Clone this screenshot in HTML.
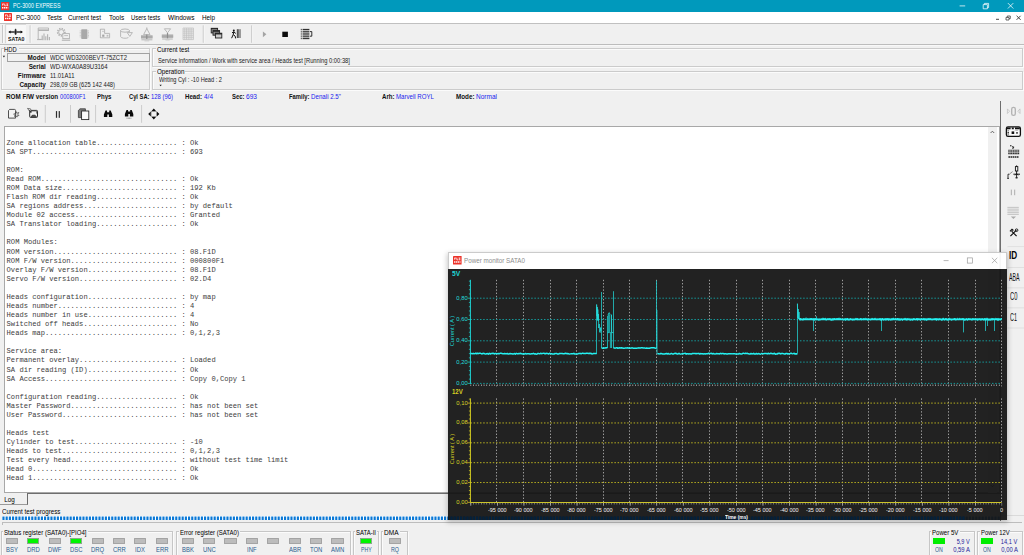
<!DOCTYPE html>
<html><head><meta charset="utf-8"><title>PC-3000 EXPRESS</title>
<style>
html,body{margin:0;padding:0;}
body{width:1024px;height:555px;overflow:hidden;background:#f0f0f0;position:relative;font-family:"Liberation Sans",sans-serif;}
div,span,svg{position:absolute;box-sizing:border-box;}
.t{white-space:pre;transform-origin:0 50%;font-family:"Liberation Sans",sans-serif;}
.b{font-weight:bold;}
.m{font-family:"Liberation Mono",monospace;}
#log{left:6.6px;top:138.6px;margin:0;position:absolute;font-family:"Liberation Mono",monospace;font-size:7.111px;line-height:9.083px;color:#3c3c3c;white-space:pre;}
</style></head><body>
<div style="left:0.00px;top:0.00px;width:1024.00px;height:12.00px;background:#0099bc;"></div>
<span class="t" style="left:13.20px;top:2.46px;font-size:6.4px;line-height:7.68px;color:#fff;transform:scaleX(0.8293);">PC-3000 EXPRESS</span>
<div style="left:0.00px;top:12.00px;width:1024.00px;height:10.70px;background:#fff;"></div>
<span class="t" style="left:15.60px;top:13.76px;font-size:6.4px;line-height:7.68px;transform:scaleX(0.9659);">PC-3000</span>
<span class="t" style="left:46.80px;top:13.76px;font-size:6.4px;line-height:7.68px;transform:scaleX(1.0042);">Tests</span>
<span class="t" style="left:68.30px;top:13.76px;font-size:6.4px;line-height:7.68px;transform:scaleX(0.9870);">Current test</span>
<span class="t" style="left:108.80px;top:13.76px;font-size:6.4px;line-height:7.68px;transform:scaleX(1.0173);">Tools</span>
<span class="t" style="left:131.20px;top:13.76px;font-size:6.4px;line-height:7.68px;transform:scaleX(0.9123);">Users tests</span>
<span class="t" style="left:167.80px;top:13.76px;font-size:6.4px;line-height:7.68px;transform:scaleX(1.0207);">Windows</span>
<span class="t" style="left:201.80px;top:13.76px;font-size:6.4px;line-height:7.68px;transform:scaleX(0.9876);">Help</span>
<div style="left:0.00px;top:22.70px;width:1024.00px;height:0.80px;background:#c0c0c0;"></div>
<div style="left:0.00px;top:44.00px;width:1024.00px;height:1.00px;background:#bcbcbc;"></div>
<div style="left:0.00px;top:45.00px;width:1024.00px;height:0.60px;background:#f8f8f8;"></div>
<div style="left:0.50px;top:48.00px;width:149.50px;height:42.00px;border:1px solid #cdcdcd;box-shadow:1px 1px 0 #fbfbfb, inset 1px 1px 0 #fbfbfb;"></div>
<div style="left:3.60px;top:45.40px;width:15.00px;height:6.00px;background:#f0f0f0;"></div>
<span class="t" style="left:4.40px;top:46.04px;font-size:6.6px;line-height:7.92px;transform:scaleX(0.8812);">HDD</span>
<div style="left:7.40px;top:53.40px;width:142.20px;height:8.90px;background:#f1f1f1;border:0.8px solid #a2a2a2;"></div>
<span class="t b" style="right:978.20px;transform-origin:100% 50%;top:53.92px;font-size:6.3px;line-height:7.56px;color:#111;">Model</span>
<span class="t" style="left:50.20px;top:53.92px;font-size:6.3px;line-height:7.56px;color:#222;transform:scaleX(0.9359);">WDC WD3200BEVT-75ZCT2</span>
<span class="t b" style="right:978.20px;transform-origin:100% 50%;top:63.02px;font-size:6.3px;line-height:7.56px;color:#111;">Serial</span>
<span class="t" style="left:50.20px;top:63.02px;font-size:6.3px;line-height:7.56px;color:#222;transform:scaleX(0.9564);">WD-WXA0A89U3164</span>
<span class="t b" style="right:978.20px;transform-origin:100% 50%;top:72.22px;font-size:6.3px;line-height:7.56px;color:#111;">Firmware</span>
<span class="t" style="left:50.20px;top:72.22px;font-size:6.3px;line-height:7.56px;color:#222;transform:scaleX(0.9408);">11.01A11</span>
<span class="t b" style="right:978.20px;transform-origin:100% 50%;top:81.22px;font-size:6.3px;line-height:7.56px;color:#111;">Capacity</span>
<span class="t" style="left:50.20px;top:81.22px;font-size:6.3px;line-height:7.56px;color:#222;transform:scaleX(0.9141);">298,09 GB (625 142 448)</span>
<div style="left:152.00px;top:48.00px;width:871.00px;height:19.00px;border:1px solid #cbcbcb;box-shadow:1px 1px 0 #fbfbfb, inset 1px 1px 0 #fbfbfb;"></div>
<div style="left:155.60px;top:45.40px;width:34.40px;height:6.00px;background:#f0f0f0;"></div>
<span class="t" style="left:156.60px;top:46.14px;font-size:6.6px;line-height:7.92px;transform:scaleX(0.9339);">Current test</span>
<span class="t" style="left:158.00px;top:56.82px;font-size:6.3px;line-height:7.56px;color:#1a1a1a;transform:scaleX(0.9159);">Service information / Work with service area / Heads test [Running 0:00:38]</span>
<div style="left:152.00px;top:71.00px;width:871.00px;height:19.00px;border:1px solid #cbcbcb;box-shadow:1px 1px 0 #fbfbfb, inset 1px 1px 0 #fbfbfb;"></div>
<div style="left:155.60px;top:68.60px;width:29.60px;height:6.00px;background:#f0f0f0;"></div>
<span class="t" style="left:156.60px;top:67.94px;font-size:6.6px;line-height:7.92px;transform:scaleX(0.9453);">Operation</span>
<span class="t" style="left:159.00px;top:75.82px;font-size:6.3px;line-height:7.56px;color:#1a1a1a;transform:scaleX(0.8967);">Writing Cyl : -10 Head : 2</span>
<span class="t b" style="left:6.00px;top:92.82px;font-size:6.3px;line-height:7.56px;color:#111;">ROM F/W version</span>
<span class="t" style="left:60.30px;top:92.82px;font-size:6.3px;line-height:7.56px;color:#1a1aee;transform:scaleX(0.9057);">000800F1</span>
<span class="t b" style="left:97.00px;top:92.82px;font-size:6.3px;line-height:7.56px;color:#111;transform:scaleX(0.9629);">Phys</span>
<span class="t b" style="left:129.00px;top:92.82px;font-size:6.3px;line-height:7.56px;color:#111;transform:scaleX(0.9150);">Cyl SA:</span>
<span class="t" style="left:151.00px;top:92.82px;font-size:6.3px;line-height:7.56px;color:#1a1aee;transform:scaleX(0.9375);">128 (96)</span>
<span class="t b" style="left:185.00px;top:92.82px;font-size:6.3px;line-height:7.56px;color:#111;transform:scaleX(0.9712);">Head:</span>
<span class="t" style="left:204.00px;top:92.82px;font-size:6.3px;line-height:7.56px;color:#1a1aee;transform:scaleX(1.0276);">4/4</span>
<span class="t b" style="left:232.00px;top:92.82px;font-size:6.3px;line-height:7.56px;color:#111;transform:scaleX(0.9393);">Sec:</span>
<span class="t" style="left:246.00px;top:92.82px;font-size:6.3px;line-height:7.56px;color:#1a1aee;transform:scaleX(1.0465);">693</span>
<span class="t b" style="left:289.00px;top:92.82px;font-size:6.3px;line-height:7.56px;color:#111;transform:scaleX(0.9294);">Family:</span>
<span class="t" style="left:311.00px;top:92.82px;font-size:6.3px;line-height:7.56px;color:#1a1aee;transform:scaleX(0.9802);">Denali 2.5&quot;</span>
<span class="t b" style="left:382.00px;top:92.82px;font-size:6.3px;line-height:7.56px;color:#111;transform:scaleX(0.9654);">Arh:</span>
<span class="t" style="left:396.00px;top:92.82px;font-size:6.3px;line-height:7.56px;color:#1a1aee;transform:scaleX(0.9691);">Marvell ROYL</span>
<span class="t b" style="left:456.00px;top:92.82px;font-size:6.3px;line-height:7.56px;color:#111;">Mode:</span>
<span class="t" style="left:476.00px;top:92.82px;font-size:6.3px;line-height:7.56px;color:#1a1aee;transform:scaleX(1.0343);">Normal</span>
<div style="left:4.40px;top:126.40px;width:996.00px;height:367.00px;background:#fff;border:0.8px solid #a8a8a8;"></div>
<div style="left:988.00px;top:127.20px;width:8.80px;height:365.40px;background:#f0f0f0;"></div>
<svg style="left:988px;top:128px" width="9" height="8" viewBox="0 0 9 8"><path d="M2.6 5 L4.4 3.2 L6.2 5" fill="none" stroke="#555" stroke-width="0.9"/></svg>
<svg style="left:988px;top:482px" width="9" height="8" viewBox="0 0 9 8"><path d="M2.6 3 L4.4 4.8 L6.2 3" fill="none" stroke="#555" stroke-width="0.9"/></svg>
<div style="left:1000.00px;top:100.50px;width:1.00px;height:420.00px;background:#6e6e6e;"></div>
<pre id="log">Zone allocation table................... : Ok
SA SPT.................................. : 693

ROM:
Read ROM................................ : Ok
ROM Data size........................... : 192 Kb
Flash ROM dir reading................... : Ok
SA regions address...................... : by default
Module 02 access........................ : Granted
SA Translator loading................... : Ok

ROM Modules:
ROM version............................. : 08.F1D
ROM F/W version......................... : 000800F1
Overlay F/W version..................... : 08.F1D
Servo F/W version....................... : 02.D4

Heads configuration..................... : by map
Heads number............................ : 4
Heads number in use..................... : 4
Switched off heads...................... : No
Heads map............................... : 0,1,2,3

Service area:
Permanent overlay....................... : Loaded
SA dir reading (ID)..................... : Ok
SA Access............................... : Copy 0,Copy 1

Configuration reading................... : Ok
Master Password......................... : has not been set
User Password........................... : has not been set

Heads test
Cylinder to test........................ : -10
Heads to test........................... : 0,1,2,3
Test every head......................... : without test time limit
Head 0.................................. : Ok
Head 1.................................. : Ok</pre>
<div style="left:0.00px;top:493.00px;width:27.60px;height:11.90px;background:#f0f0f0;border-right:0.9px solid #6a6a6a;border-bottom:0.8px solid #9a9a9a;"></div>
<div style="left:27.00px;top:492.50px;width:973.40px;height:0.90px;background:#6e6e6e;"></div>
<span class="t" style="left:4.20px;top:495.62px;font-size:6.3px;line-height:7.56px;">Log</span>
<span class="t" style="left:2.20px;top:507.82px;font-size:6.3px;line-height:7.56px;transform:scaleX(0.9886);">Current test progress</span>
<div style="left:2.00px;top:515.60px;width:998.00px;height:4.40px;background:#fff;"></div>
<svg style="left:2px;top:515px" width="1000" height="6" viewBox="2 515 1000 6"><path d="M2.4 518.3 H1000" stroke="#0a78d6" stroke-width="3.5" stroke-dasharray="2.15 1.05" fill="none"/></svg>
<div style="left:2.00px;top:521.60px;width:1020.00px;height:3.40px;border:0.8px solid #bdbdbd;border-right:none;border-bottom:none;"></div>
<div style="left:1001.00px;top:514.90px;width:23.00px;height:0.80px;background:#dadada;"></div>
<div style="left:0.80px;top:531.40px;width:172.60px;height:26.00px;border:0.8px solid #c6c6c6;box-shadow:1px 1px 0 #fbfbfb, inset 1px 1px 0 #fbfbfb;"></div>
<div style="left:3.40px;top:528.40px;width:84.60px;height:6.00px;background:#f0f0f0;"></div>
<span class="t" style="left:4.40px;top:528.52px;font-size:6.3px;line-height:7.56px;transform:scaleX(0.9656);">Status register (SATA0)-[PIO4]</span>
<div style="left:5.90px;top:538.00px;width:12.20px;height:6.40px;background:#bcbcbc;border:0.8px solid #a4a4a4;border-radius:0.5px;"></div>
<span class="t" style="left:6.07px;top:545.82px;font-size:6.3px;line-height:7.56px;color:#2b5c8f;transform:scaleX(0.9400);">BSY</span>
<div style="left:27.30px;top:538.00px;width:12.20px;height:6.40px;background:#00f500;border:0.8px solid #8aa88a;"></div>
<span class="t" style="left:26.98px;top:545.82px;font-size:6.3px;line-height:7.56px;color:#2b5c8f;transform:scaleX(0.9400);">DRD</span>
<div style="left:48.70px;top:538.00px;width:12.20px;height:6.40px;background:#bcbcbc;border:0.8px solid #a4a4a4;border-radius:0.5px;"></div>
<span class="t" style="left:48.06px;top:545.82px;font-size:6.3px;line-height:7.56px;color:#2b5c8f;transform:scaleX(0.9400);">DWF</span>
<div style="left:70.10px;top:538.00px;width:12.20px;height:6.40px;background:#00f500;border:0.8px solid #8aa88a;"></div>
<span class="t" style="left:69.95px;top:545.82px;font-size:6.3px;line-height:7.56px;color:#2b5c8f;transform:scaleX(0.9400);">DSC</span>
<div style="left:91.50px;top:538.00px;width:12.20px;height:6.40px;background:#bcbcbc;border:0.8px solid #a4a4a4;border-radius:0.5px;"></div>
<span class="t" style="left:91.02px;top:545.82px;font-size:6.3px;line-height:7.56px;color:#2b5c8f;transform:scaleX(0.9400);">DRQ</span>
<div style="left:112.90px;top:538.00px;width:12.20px;height:6.40px;background:#bcbcbc;border:0.8px solid #a4a4a4;border-radius:0.5px;"></div>
<span class="t" style="left:112.58px;top:545.82px;font-size:6.3px;line-height:7.56px;color:#2b5c8f;transform:scaleX(0.9400);">CRR</span>
<div style="left:134.30px;top:538.00px;width:12.20px;height:6.40px;background:#bcbcbc;border:0.8px solid #a4a4a4;border-radius:0.5px;"></div>
<span class="t" style="left:135.46px;top:545.82px;font-size:6.3px;line-height:7.56px;color:#2b5c8f;transform:scaleX(0.9400);">IDX</span>
<div style="left:155.70px;top:538.00px;width:12.20px;height:6.40px;background:#bcbcbc;border:0.8px solid #a4a4a4;border-radius:0.5px;"></div>
<span class="t" style="left:155.55px;top:545.82px;font-size:6.3px;line-height:7.56px;color:#2b5c8f;transform:scaleX(0.9400);">ERR</span>
<div style="left:176.40px;top:531.40px;width:174.40px;height:26.00px;border:0.8px solid #c6c6c6;box-shadow:1px 1px 0 #fbfbfb, inset 1px 1px 0 #fbfbfb;"></div>
<div style="left:179.20px;top:528.40px;width:61.00px;height:6.00px;background:#f0f0f0;"></div>
<span class="t" style="left:180.20px;top:528.52px;font-size:6.3px;line-height:7.56px;transform:scaleX(0.9558);">Error register (SATA0)</span>
<div style="left:181.70px;top:538.00px;width:12.20px;height:6.40px;background:#bcbcbc;border:0.8px solid #a4a4a4;border-radius:0.5px;"></div>
<span class="t" style="left:181.87px;top:545.82px;font-size:6.3px;line-height:7.56px;color:#2b5c8f;transform:scaleX(0.9400);">BBK</span>
<div style="left:203.08px;top:538.00px;width:12.20px;height:6.40px;background:#bcbcbc;border:0.8px solid #a4a4a4;border-radius:0.5px;"></div>
<span class="t" style="left:202.76px;top:545.82px;font-size:6.3px;line-height:7.56px;color:#2b5c8f;transform:scaleX(0.9400);">UNC</span>
<div style="left:224.46px;top:538.00px;width:12.20px;height:6.40px;background:#bcbcbc;border:0.8px solid #a4a4a4;border-radius:0.5px;"></div>
<div style="left:245.84px;top:538.00px;width:12.20px;height:6.40px;background:#bcbcbc;border:0.8px solid #a4a4a4;border-radius:0.5px;"></div>
<span class="t" style="left:247.17px;top:545.82px;font-size:6.3px;line-height:7.56px;color:#2b5c8f;transform:scaleX(0.9400);">INF</span>
<div style="left:267.22px;top:538.00px;width:12.20px;height:6.40px;background:#bcbcbc;border:0.8px solid #a4a4a4;border-radius:0.5px;"></div>
<div style="left:288.60px;top:538.00px;width:12.20px;height:6.40px;background:#bcbcbc;border:0.8px solid #a4a4a4;border-radius:0.5px;"></div>
<span class="t" style="left:288.61px;top:545.82px;font-size:6.3px;line-height:7.56px;color:#2b5c8f;transform:scaleX(0.9400);">ABR</span>
<div style="left:309.98px;top:538.00px;width:12.20px;height:6.40px;background:#bcbcbc;border:0.8px solid #a4a4a4;border-radius:0.5px;"></div>
<span class="t" style="left:309.88px;top:545.82px;font-size:6.3px;line-height:7.56px;color:#2b5c8f;transform:scaleX(0.9400);">TON</span>
<div style="left:331.36px;top:538.00px;width:12.20px;height:6.40px;background:#bcbcbc;border:0.8px solid #a4a4a4;border-radius:0.5px;"></div>
<span class="t" style="left:330.88px;top:545.82px;font-size:6.3px;line-height:7.56px;color:#2b5c8f;transform:scaleX(0.9400);">AMN</span>
<div style="left:352.80px;top:531.40px;width:26.60px;height:26.00px;border:0.8px solid #c6c6c6;box-shadow:1px 1px 0 #fbfbfb, inset 1px 1px 0 #fbfbfb;"></div>
<div style="left:355.20px;top:528.40px;width:22.00px;height:6.00px;background:#f0f0f0;"></div>
<span class="t" style="left:356.20px;top:528.52px;font-size:6.3px;line-height:7.56px;transform:scaleX(0.9470);">SATA-II</span>
<div style="left:360.10px;top:538.00px;width:12.20px;height:6.40px;background:#00f500;border:0.8px solid #8aa88a;"></div>
<span class="t" style="left:360.90px;top:545.82px;font-size:6.3px;line-height:7.56px;color:#2b5c8f;transform:scaleX(0.8183);">PHY</span>
<div style="left:380.90px;top:531.40px;width:26.90px;height:26.00px;border:0.8px solid #c6c6c6;box-shadow:1px 1px 0 #fbfbfb, inset 1px 1px 0 #fbfbfb;"></div>
<div style="left:383.40px;top:528.40px;width:16.50px;height:6.00px;background:#f0f0f0;"></div>
<span class="t" style="left:384.40px;top:528.52px;font-size:6.3px;line-height:7.56px;transform:scaleX(1.0357);">DMA</span>
<div style="left:388.60px;top:538.00px;width:12.20px;height:6.40px;background:#bcbcbc;border:0.8px solid #a4a4a4;border-radius:0.5px;"></div>
<span class="t" style="left:390.70px;top:545.82px;font-size:6.3px;line-height:7.56px;color:#2b5c8f;transform:scaleX(0.8466);">RQ</span>
<div style="left:928.50px;top:531.40px;width:46.90px;height:26.00px;border:0.8px solid #c6c6c6;box-shadow:1px 1px 0 #fbfbfb, inset 1px 1px 0 #fbfbfb;"></div>
<div style="left:931.40px;top:528.40px;width:28.40px;height:6.00px;background:#f0f0f0;"></div>
<span class="t" style="left:932.40px;top:528.52px;font-size:6.3px;line-height:7.56px;transform:scaleX(0.9665);">Power 5V</span>
<div style="left:933.40px;top:538.10px;width:11.40px;height:6.00px;background:#00ee00;"></div>
<span class="t" style="right:54.40px;transform-origin:100% 50%;top:537.82px;font-size:6.3px;line-height:7.56px;color:#22229a;transform:scaleX(0.8837);">5,9 V</span>
<span class="t" style="left:935.00px;top:545.82px;font-size:6.3px;line-height:7.56px;color:#2b5c8f;transform:scaleX(0.8254);">ON</span>
<span class="t" style="right:54.40px;transform-origin:100% 50%;top:545.82px;font-size:6.3px;line-height:7.56px;color:#22229a;transform:scaleX(0.9347);">0,59 A</span>
<div style="left:976.70px;top:531.40px;width:46.60px;height:26.00px;border:0.8px solid #c6c6c6;box-shadow:1px 1px 0 #fbfbfb, inset 1px 1px 0 #fbfbfb;"></div>
<div style="left:979.80px;top:528.40px;width:30.70px;height:6.00px;background:#f0f0f0;"></div>
<span class="t" style="left:980.80px;top:528.52px;font-size:6.3px;line-height:7.56px;transform:scaleX(0.9313);">Power 12V</span>
<div style="left:981.40px;top:538.10px;width:11.60px;height:6.00px;background:#00ee00;"></div>
<span class="t" style="right:6.40px;transform-origin:100% 50%;top:537.82px;font-size:6.3px;line-height:7.56px;color:#22229a;transform:scaleX(0.9004);">14,1 V</span>
<span class="t" style="left:982.60px;top:545.82px;font-size:6.3px;line-height:7.56px;color:#2b5c8f;transform:scaleX(0.8254);">ON</span>
<span class="t" style="right:6.40px;transform-origin:100% 50%;top:545.82px;font-size:6.3px;line-height:7.56px;color:#22229a;transform:scaleX(0.9291);">0,00 A</span>
<svg style="left:1.2px;top:1.7px" width="9.3" height="9.3" viewBox="0 0 9.3 9.3"><rect x="0" y="0" width="8.3" height="8.3" rx="0.4" fill="#ec3229"/><g fill="none" stroke="#fff" stroke-width="0.78"><path d="M1.245 1.9712500000000002 H3.1125000000000003 M1.6600000000000001 1.9712500000000002 V3.6312500000000005 M3.7350000000000003 1.6600000000000001 V3.7350000000000003 H4.7725 M5.3950000000000005 1.9712500000000002 H7.158750000000001 M5.8100000000000005 2.8012500000000005 H6.8475 M5.3950000000000005 3.6312500000000005 H7.158750000000001"/><path d="M1.0375 5.8100000000000005 H7.262500000000001" stroke-width="1.56" stroke-dasharray="1.35 0.57"/></g></svg>
<svg style="left:3.9px;top:13.0px" width="9.0" height="9.0" viewBox="0 0 9.0 9.0"><rect x="0" y="0" width="8.0" height="8.0" rx="0.4" fill="#ec3229"/><g fill="none" stroke="#fff" stroke-width="0.75"><path d="M1.2 1.9 H3.0 M1.6 1.9 V3.5 M3.6 1.6 V3.6 H4.6 M5.2 1.9 H6.9 M5.6 2.7 H6.6 M5.2 3.5 H6.9"/><path d="M1.0 5.6 H7.0" stroke-width="1.50" stroke-dasharray="1.30 0.55"/></g></svg>
<svg style="left:950px;top:0px" width="74" height="23" viewBox="950 0 74 23"><g fill="none" stroke="#fff" stroke-width="0.75"><path d="M959.6 5.9 H965.2"/><path d="M983.2 4.6 H987.4 V8.8 H983.2 Z M984.4 4.6 V3.4 H988.6 V7.6 H987.4"/><path d="M1007.9 3.1 L1013.3 8.5 M1013.3 3.1 L1007.9 8.5"/></g><g fill="none" stroke="#444" stroke-width="0.8"><path d="M996 19.3 H999" stroke-width="1"/><path d="M1006 17.4 H1009 V20 H1006 Z M1007.3 17.4 V16 H1010.3 V18.6 H1009"/><path d="M1016.6 15.8 L1020.6 19.8 M1020.6 15.8 L1016.6 19.8" stroke-width="1"/></g></svg>
<svg style="left:0px;top:23px" width="330" height="22" viewBox="0 23 330 22"><path d="M2.5 25 V43" stroke="#b4b4b4" stroke-width="0.8"/><path d="M3.3 25 V43" stroke="#fff" stroke-width="0.6"/><rect x="5.6" y="24.2" width="20.4" height="19" fill="#f8f8f8"/><path d="M5.6 43.2 V24.4 H26" stroke="#c9c9c9" stroke-width="0.7" fill="none"/><path d="M9.5 32 H21.8" stroke="#111" stroke-width="1.3"/><path d="M8.2 32 L10.6 30.6 V33.4 Z M23 32 L20.6 30.6 V33.4 Z" fill="#111"/><path d="M15.6 28.8 V34.8" stroke="#111" stroke-width="0.9"/><path d="M14.4 30.2 H16.8 M14.4 33.7 H16.8" stroke="#111" stroke-width="0.7"/><path d="M30.2 25.4 V42.8" stroke="#b5b5b5" stroke-width="0.8"/><path d="M31.0 25.4 V42.8" stroke="#fdfdfd" stroke-width="0.7"/><path d="M203.3 25.4 V42.8" stroke="#b5b5b5" stroke-width="0.8"/><path d="M204.10000000000002 25.4 V42.8" stroke="#fdfdfd" stroke-width="0.7"/><path d="M251.8 25.4 V42.8" stroke="#b5b5b5" stroke-width="0.8"/><path d="M252.60000000000002 25.4 V42.8" stroke="#fdfdfd" stroke-width="0.7"/><g fill="none" stroke="#b2b2b2" stroke-width="0.9"><path d="M38.2 28 H48.5 V31 M38.2 28 V39.4 H42.5"/><path d="M38.2 30.2 H48.5" stroke-width="1.6"/><path d="M37 39.6 H41"/><path d="M42.2 40.2 V35.5 M44 40.2 V33.5 M45.8 40.2 V36.2 M47.6 40.2 V34.2 M49.4 40.2 V37" stroke-width="1.1"/></g><g fill="none" stroke="#b2b2b2"><circle cx="61.3" cy="32.2" r="3.6" stroke-width="1.7" stroke-dasharray="1.3 1.1"/><circle cx="61.3" cy="32.2" r="2.6" stroke-width="0.8"/><rect x="62.8" y="33.6" width="6.6" height="5" fill="#f0f0f0" stroke-width="0.9"/><path d="M61.8 40.2 H70.2" stroke-width="1.1"/><path d="M64.2 35.6 H68" stroke-width="0.8"/></g><rect x="81.2" y="29.3" width="6.2" height="9.8" rx="0.8" fill="#a9a9a9"/><path d="M80.2 30.6 V38" stroke="#b8b8b8" stroke-width="1" stroke-dasharray="0.7 0.8"/><path d="M88.4 30.6 V38" stroke="#b8b8b8" stroke-width="1" stroke-dasharray="0.7 0.8"/><g fill="none" stroke="#b2b2b2" stroke-width="0.9"><path d="M100.4 29 V38 M100.4 29.2 H104.6 V33.4 H109.6 V37.8 H100.4"/></g><rect x="102.2" y="34.6" width="2.2" height="2.2" fill="#a6a6a6"/><rect x="106.6" y="34.8" width="1.8" height="1.8" fill="#bcbcbc"/><rect x="102.4" y="30.8" width="1.2" height="1.2" fill="#bcbcbc"/><g fill="none" stroke="#b2b2b2" stroke-width="0.9"><ellipse cx="125" cy="30.6" rx="4.4" ry="1.6"/><path d="M120.6 30.6 V36.6 A4.4 1.8 0 0 0 128.4 37.6 M129.4 30.6 V32"/><path d="M127.2 32.6 H132.4 L129.8 36.4 Z" fill="#f0f0f0"/></g><g fill="none" stroke="#b2b2b2" stroke-width="0.9"><path d="M146.8 27.4 V29.2 M146.8 28.6 L143.6 34.6 H150 Z"/></g><rect x="141" y="35.2" width="11.6" height="3.4" fill="#b4b4b4"/><path d="M141 37 H152.6" stroke="#9c9c9c" stroke-width="0.6"/><path d="M146.8 34.4 V39" stroke="#8e8e8e" stroke-width="1.2"/><path d="M141.4 39.8 H152.4" stroke="#a8a8a8" stroke-width="0.8"/><path d="M144.5 40.9 H149.2" stroke="#bbb" stroke-width="0.6"/><g fill="none" stroke="#b2b2b2" stroke-width="0.9"><path d="M164.4 28.8 H170.6 L167.5 32.8 Z"/></g><rect x="161.8" y="34.4" width="11.4" height="3.6" fill="#b4b4b4"/><path d="M161.8 36.2 H173.2" stroke="#9c9c9c" stroke-width="0.6"/><path d="M167.5 33 V38.4" stroke="#8e8e8e" stroke-width="1.2"/><path d="M162.2 39 H172.8" stroke="#a8a8a8" stroke-width="0.8"/><path d="M165.5 40 H169.6" stroke="#bbb" stroke-width="0.6"/><path d="M183.00 28 V39.6 M184.75 28 V39.6 M186.50 28 V39.6 M188.25 28 V39.6 M190.00 28 V39.6 M191.75 28 V39.6 M193.50 28 V39.6 M183 28.00 H193.5 M183 29.93 H193.5 M183 31.86 H193.5 M183 33.79 H193.5 M183 35.72 H193.5 M183 37.65 H193.5 M183 39.58 H193.5" stroke="#c0c0c0" stroke-width="0.7" fill="none"/><g stroke="#222" stroke-width="0.9"><rect x="211.2" y="28.3" width="6.4" height="4.6" fill="#9a9a9a"/><rect x="213" y="30.6" width="6.6" height="4.6" fill="#8a8a8a"/><rect x="215.4" y="33.2" width="6.4" height="4.8" fill="#c9c9c9"/></g><path d="M215.4 33.8 H221.8" stroke="#222" stroke-width="1.3"/><path d="M211.2 28.8 H217.6 M213 31.1 H219.6" stroke="#222" stroke-width="1.1"/><rect x="236.8" y="29.2" width="2" height="8.8" fill="#555"/><rect x="239" y="29.2" width="2" height="8.8" fill="#9a9a9a"/><circle cx="233.8" cy="30.6" r="1" fill="#111"/><path d="M233.9 31.6 L233.2 34.6 L235.2 36.2 L235.6 38.4 M233.2 34.6 L231.6 38.2 M232 32.8 L233.6 32 L235.8 33.4" stroke="#111" stroke-width="1" fill="none"/><path d="M262.9 31.4 L266.4 34.3 L262.9 37.2 Z" fill="#a4a4a4"/><rect x="282.3" y="31.7" width="5.6" height="5.3" fill="#0c0c0c"/><path d="M302.6 29.40 H309.4 M302.6 31.25 H309.4 M302.6 33.10 H309.4 M302.6 34.95 H309.4 M302.6 36.80 H309.4 M302.6 38.65 H309.4" stroke="#1a1a1a" stroke-width="1" fill="none"/><path d="M300.8 29.40 H301.8 M300.8 31.25 H301.8 M300.8 33.10 H301.8 M300.8 34.95 H301.8 M300.8 36.80 H301.8 M300.8 38.65 H301.8" stroke="#1a1a1a" stroke-width="0.9"/><path d="M310 31.6 H311.8 V36.2 H310" stroke="#1a1a1a" stroke-width="0.9" fill="none"/></svg>
<span class="t b" style="left:7.60px;top:35.54px;font-size:5.6px;line-height:6.72px;color:#111;transform:scaleX(0.9356);">SATA0</span>
<svg style="left:0px;top:103px" width="170" height="23" viewBox="0 103 170 23"><path d="M45.3 105 V122.8" stroke="#c2c2c2" stroke-width="0.8"/><path d="M70.5 105 V122.8" stroke="#c2c2c2" stroke-width="0.8"/><path d="M95.6 105 V122.8" stroke="#c2c2c2" stroke-width="0.8"/><path d="M141.6 105 V122.8" stroke="#c2c2c2" stroke-width="0.8"/><path d="M9.6 109.4 H14.4 Q15.6 109.4 15.6 110.6 V118.1 H8.5 V110.6 Z" fill="#f3f3f3" stroke="#333" stroke-width="0.85" stroke-linejoin="round"/><path d="M16.2 111.6 L16.9 113.3 L18.8 112.4 L17.9 114.3 L19 115.6 L17.4 115.6 L17.2 117 L16 116 L14.6 116.8 L14.9 115.2 L13.6 114.2 L15.2 113.6 Z" fill="#e4e4e4" stroke="#4a4a4a" stroke-width="0.7"/><path d="M15.6 112.4 V116.2" stroke="#333" stroke-width="0.85"/><rect x="29.7" y="110.4" width="7.8" height="7" rx="0.8" fill="#f2f2f2" stroke="#2c2c2c" stroke-width="1.0"/><path d="M30.6 116.4 L32.4 114.7 H35 L36.8 116.4 V117 H30.6 Z" fill="#4a4a4a"/><path d="M31 111 H36.4" stroke="#555" stroke-width="0.7"/><path d="M36.6 111 V113.6" stroke="#555" stroke-width="0.8"/><path d="M27.5 108.4 L30.6 108.9 L31.4 112 L29.6 111.2 Z" fill="#efefef" stroke="#444" stroke-width="0.7" stroke-linejoin="round"/><path d="M29.4 110.4 L31.2 112.6" stroke="#2c2c2c" stroke-width="1.1"/><rect x="55.9" y="111.1" width="1.2" height="6.7" fill="#2c2c2c"/><rect x="58.7" y="111.1" width="1.2" height="6.7" fill="#2c2c2c"/><path d="M78.4 110.4 L80 108.8 H85.4 V117.6 H78.4 Z" fill="#7c7c7c" stroke="#3a3a3a" stroke-width="0.8"/><rect x="81.6" y="111" width="7.2" height="8.6" fill="#fafafa" stroke="#222" stroke-width="0.85"/><path d="M107.0 110.5 h-1.5 l-1.6 4 v2.6 h3.4 v-2.6 h1.6 v2.6 h3.4 v-2.6 l-1.6 -4 h-1.5 v1.7 h-2.1 Z" fill="#0a0a0a"/><path d="M128.0 109.9 h-1.5 l-1.6 4 v2.6 h3.4 v-2.6 h1.6 v2.6 h3.4 v-2.6 l-1.6 -4 h-1.5 v1.7 h-2.1 Z" fill="#0a0a0a"/><path d="M126.6 118.2 H131.8" stroke="#666" stroke-width="0.9" stroke-dasharray="0.8 0.5"/><path d="M153.8 108.6 l2.4 2.6 h-4.8 Z M153.8 119.4 l2.4 -2.6 h-4.8 Z M148.20000000000002 114 l2.6 -2.4 v4.8 Z M159.4 114 l-2.6 -2.4 v4.8 Z" fill="#0a0a0a"/><rect x="151.20000000000002" y="111.6" width="5.2" height="4.8" fill="none" stroke="#777" stroke-width="0.5"/></svg>
<svg style="left:1001px;top:100px" width="23" height="232" viewBox="1001 100 23 232"><rect x="1011.7" y="107.4" width="3.6" height="8" rx="1.7" fill="none" stroke="#b3b3b3" stroke-width="1.35"/><path d="M1007.4 108.9 L1009.6 111.2 L1007.4 113.5 Z M1020 108.9 L1017.8 111.2 L1020 113.5 Z" fill="none" stroke="#b3b3b3" stroke-width="0.6"/><rect x="1006.4" y="126.8" width="14" height="9.6" rx="1.6" fill="#fafafa" stroke="#111" stroke-width="1.3"/><path d="M1007 128.4 H1019.8" stroke="#111" stroke-width="1.6" stroke-dasharray="3.6 1.2 2 1.2 4 0"/><path d="M1008.2 130.4 V135.4" stroke="#111" stroke-width="1.2" stroke-dasharray="0.9 0.7"/><rect x="1011.6" y="131.4" width="2.6" height="2.6" fill="#111"/><rect x="1016.2" y="132.2" width="1.6" height="1.4" fill="#111"/><path d="M1014.8 130.4 H1018.6" stroke="#555" stroke-width="0.6" stroke-dasharray="0.7 0.6"/><path d="M1010.6 145 V146.4 M1011.6 145.6 L1013.4 147.8 M1013.6 146.4 V148.2 H1012" stroke="#111" stroke-width="0.8" fill="none"/><path d="M1008.2 150.20 H1019.2 M1008.2 151.90 H1019.2 M1008.2 153.60 H1019.2" stroke="#333" stroke-width="1.1"/><path d="M1010 149.6 V154.6 M1012.4 149.6 V154.6 M1014.8 149.6 V154.6 M1017.2 149.6 V154.6" stroke="#e8e8e8" stroke-width="0.5"/><path d="M1008.4 157 H1019" stroke="#222" stroke-width="1.5" stroke-dasharray="1.6 0.5"/><rect x="1015.4" y="166.6" width="2.4" height="4.4" fill="#f4f4f4" stroke="#111" stroke-width="0.9"/><path d="M1016.6 165.4 V166.6 M1016.6 171 V178.4" stroke="#111" stroke-width="0.9"/><path d="M1013.4 174.2 H1020" stroke="#111" stroke-width="1"/><path d="M1015 175.4 L1016.6 173.4 L1018.2 175.4 M1015.2 177.8 H1018" stroke="#111" stroke-width="0.7" fill="none"/><path d="M1008 178.4 V174.2 H1009.6 M1007.2 178.4 H1009" stroke="#222" stroke-width="0.9" fill="none"/><path d="M1010 173.6 L1012.6 171.6" stroke="#666" stroke-width="0.7"/><rect x="1010.8" y="189.6" width="1.1" height="5.6" fill="#b3b3b3"/><rect x="1014.1" y="189.6" width="1.1" height="5.6" fill="#b3b3b3"/><path d="M1007.4 207.40 H1018.8 M1007.4 209.15 H1018.8 M1007.4 210.90 H1018.8 M1007.4 212.65 H1018.8 M1007.4 214.40 H1018.8" stroke="#bdbdbd" stroke-width="0.9"/><path d="M1010.8 216.4 H1016 L1013.4 218.9 Z" fill="#aaa"/><path d="M1010.4 236.2 L1016.4 230.2 M1016.6 236.2 L1011.6 231.2" stroke="#111" stroke-width="1.2" fill="none"/><path d="M1010 231.4 L1012 229.4 L1013.4 230.6" stroke="#111" stroke-width="1.3" fill="none"/><circle cx="1016.6" cy="230.2" r="1.3" fill="none" stroke="#111" stroke-width="0.9"/><path d="M1007.5 246.6 H1024" stroke="#dcdcdc" stroke-width="0.8"/><path d="M1007.5 267.5 H1024" stroke="#dcdcdc" stroke-width="0.8"/><path d="M1007.5 287.8 H1024" stroke="#dcdcdc" stroke-width="0.8"/><path d="M1007.5 307.8 H1024" stroke="#dcdcdc" stroke-width="0.8"/><path d="M1007.5 328 H1024" stroke="#dcdcdc" stroke-width="0.8"/></svg>
<span class="t b" style="left:1009.40px;top:250.38px;font-size:10.2px;line-height:12.24px;color:#050505;transform:scaleX(0.8039);">ID</span>
<span class="t" style="left:1008.50px;top:270.82px;font-size:10.8px;line-height:12.96px;color:#111;transform:scaleX(0.4905);">ABA</span>
<span class="t" style="left:1010.20px;top:291.26px;font-size:10.4px;line-height:12.48px;color:#111;transform:scaleX(0.5566);">C0</span>
<span class="t" style="left:1010.45px;top:311.66px;font-size:10.4px;line-height:12.48px;color:#111;transform:scaleX(0.5190);">C1</span>
<svg style="left:0px;top:50px" width="170" height="40" viewBox="0 50 170 40"><path d="M2.7 55.8 H5.1 L3.9 57.4 Z" fill="#222"/><path d="M159.4 84.7 H161.8 L160.6 86.2 Z" fill="#222"/></svg>
<div style="left:448.4px;top:252.3px;width:558.6px;height:268.1px;box-shadow:0 1.5px 5px 1px rgba(0,0,0,0.22);opacity:0.94;">
<div style="left:0;top:0;width:558.6px;height:16.7px;background:#fff;border:0.6px solid #c8c8c8;border-bottom:none;"></div>
<div style="left:0;top:16.7px;width:558.6px;height:251.40000000000003px;background:#151515;"></div>
</div>
<svg style="left:452.6px;top:256.2px" width="9.6" height="9.6" viewBox="0 0 9.6 9.6"><rect x="0" y="0" width="8.6" height="8.6" rx="0.4" fill="#ec3229"/><g fill="none" stroke="#fff" stroke-width="0.81"><path d="M1.2899999999999998 2.0425 H3.2249999999999996 M1.72 2.0425 V3.7624999999999997 M3.87 1.72 V3.87 H4.944999999999999 M5.59 2.0425 H7.4175 M6.02 2.9025 H7.095 M5.59 3.7624999999999997 H7.4175"/><path d="M1.075 6.02 H7.5249999999999995" stroke-width="1.61" stroke-dasharray="1.40 0.59"/></g></svg>
<span class="t" style="left:464.20px;top:256.82px;font-size:6.3px;line-height:7.56px;color:#8c8c8c;transform:scaleX(0.9936);">Power monitor SATA0</span>
<svg style="left:940px;top:254px" width="64" height="14" viewBox="940 254 64 14"><path d="M943.6 260.6 H948.6" stroke="#9a9a9a" stroke-width="0.7" fill="none"/><rect x="967.3" y="257.9" width="5.2" height="5.2" stroke="#9a9a9a" stroke-width="0.7" fill="none"/><path d="M991.9 257.8 L997.3 263.2 M997.3 257.8 L991.9 263.2" stroke="#9a9a9a" stroke-width="0.7" fill="none"/></svg>
<svg style="left:448px;top:269px" width="560" height="252" viewBox="448 269 560 252"><path d="M496.50 279.8 V386.40" stroke="#b4b4b4" stroke-width="0.85" stroke-dasharray="1.4 1.8" fill="none"/><path d="M523.50 279.8 V386.40" stroke="#b4b4b4" stroke-width="0.85" stroke-dasharray="1.4 1.8" fill="none"/><path d="M550.50 279.8 V386.40" stroke="#b4b4b4" stroke-width="0.85" stroke-dasharray="1.4 1.8" fill="none"/><path d="M576.50 279.8 V386.40" stroke="#b4b4b4" stroke-width="0.85" stroke-dasharray="1.4 1.8" fill="none"/><path d="M603.50 279.8 V386.40" stroke="#b4b4b4" stroke-width="0.85" stroke-dasharray="1.4 1.8" fill="none"/><path d="M629.50 279.8 V386.40" stroke="#b4b4b4" stroke-width="0.85" stroke-dasharray="1.4 1.8" fill="none"/><path d="M656.50 279.8 V386.40" stroke="#b4b4b4" stroke-width="0.85" stroke-dasharray="1.4 1.8" fill="none"/><path d="M682.50 279.8 V386.40" stroke="#b4b4b4" stroke-width="0.85" stroke-dasharray="1.4 1.8" fill="none"/><path d="M709.50 279.8 V386.40" stroke="#b4b4b4" stroke-width="0.85" stroke-dasharray="1.4 1.8" fill="none"/><path d="M736.50 279.8 V386.40" stroke="#b4b4b4" stroke-width="0.85" stroke-dasharray="1.4 1.8" fill="none"/><path d="M762.50 279.8 V386.40" stroke="#b4b4b4" stroke-width="0.85" stroke-dasharray="1.4 1.8" fill="none"/><path d="M789.50 279.8 V386.40" stroke="#b4b4b4" stroke-width="0.85" stroke-dasharray="1.4 1.8" fill="none"/><path d="M815.50 279.8 V386.40" stroke="#b4b4b4" stroke-width="0.85" stroke-dasharray="1.4 1.8" fill="none"/><path d="M842.50 279.8 V386.40" stroke="#b4b4b4" stroke-width="0.85" stroke-dasharray="1.4 1.8" fill="none"/><path d="M868.50 279.8 V386.40" stroke="#b4b4b4" stroke-width="0.85" stroke-dasharray="1.4 1.8" fill="none"/><path d="M895.50 279.8 V386.40" stroke="#b4b4b4" stroke-width="0.85" stroke-dasharray="1.4 1.8" fill="none"/><path d="M921.50 279.8 V386.40" stroke="#b4b4b4" stroke-width="0.85" stroke-dasharray="1.4 1.8" fill="none"/><path d="M948.50 279.8 V386.40" stroke="#b4b4b4" stroke-width="0.85" stroke-dasharray="1.4 1.8" fill="none"/><path d="M975.50 279.8 V386.40" stroke="#b4b4b4" stroke-width="0.85" stroke-dasharray="1.4 1.8" fill="none"/><path d="M1001.50 279.8 V386.40" stroke="#b4b4b4" stroke-width="0.85" stroke-dasharray="1.4 1.8" fill="none"/><path d="M470.4 298.20 H1001.6" stroke="#15999a" stroke-width="1.0" stroke-dasharray="1.5 1.7" fill="none"/><path d="M470.4 319.50 H1001.6" stroke="#15999a" stroke-width="1.0" stroke-dasharray="1.5 1.7" fill="none"/><path d="M470.4 340.80 H1001.6" stroke="#15999a" stroke-width="1.0" stroke-dasharray="1.5 1.7" fill="none"/><path d="M470.4 362.10 H1001.6" stroke="#15999a" stroke-width="1.0" stroke-dasharray="1.5 1.7" fill="none"/><path d="M470.4 383.40 H1001.6" stroke="#15999a" stroke-width="1.0" stroke-dasharray="1.5 1.7" fill="none"/><path d="M470.4 385.30 H1001.6" stroke="#b4b4b4" stroke-width="1.4" stroke-dasharray="0.75 1.906" fill="none"/><path d="M470.4 279.8 V383.90" stroke="#1fd6d6" stroke-width="1" fill="none"/><path d="M467.80 383.40 H470.4 M468.90 379.14 H470.4 M468.90 374.88 H470.4 M468.90 370.62 H470.4 M468.90 366.36 H470.4 M467.80 362.10 H470.4 M468.90 357.84 H470.4 M468.90 353.58 H470.4 M468.90 349.32 H470.4 M468.90 345.06 H470.4 M467.80 340.80 H470.4 M468.90 336.54 H470.4 M468.90 332.28 H470.4 M468.90 328.02 H470.4 M468.90 323.76 H470.4 M467.80 319.50 H470.4 M468.90 315.24 H470.4 M468.90 310.98 H470.4 M468.90 306.72 H470.4 M468.90 302.46 H470.4 M467.80 298.20 H470.4 M468.90 293.94 H470.4 M468.90 289.68 H470.4 M468.90 285.42 H470.4 M468.90 281.16 H470.4" stroke="#1fd6d6" stroke-width="0.7" fill="none"/><path d="M496.50 398.4 V502.40" stroke="#b4b4b4" stroke-width="0.85" stroke-dasharray="1.4 1.8" fill="none"/><path d="M523.50 398.4 V502.40" stroke="#b4b4b4" stroke-width="0.85" stroke-dasharray="1.4 1.8" fill="none"/><path d="M550.50 398.4 V502.40" stroke="#b4b4b4" stroke-width="0.85" stroke-dasharray="1.4 1.8" fill="none"/><path d="M576.50 398.4 V502.40" stroke="#b4b4b4" stroke-width="0.85" stroke-dasharray="1.4 1.8" fill="none"/><path d="M603.50 398.4 V502.40" stroke="#b4b4b4" stroke-width="0.85" stroke-dasharray="1.4 1.8" fill="none"/><path d="M629.50 398.4 V502.40" stroke="#b4b4b4" stroke-width="0.85" stroke-dasharray="1.4 1.8" fill="none"/><path d="M656.50 398.4 V502.40" stroke="#b4b4b4" stroke-width="0.85" stroke-dasharray="1.4 1.8" fill="none"/><path d="M682.50 398.4 V502.40" stroke="#b4b4b4" stroke-width="0.85" stroke-dasharray="1.4 1.8" fill="none"/><path d="M709.50 398.4 V502.40" stroke="#b4b4b4" stroke-width="0.85" stroke-dasharray="1.4 1.8" fill="none"/><path d="M736.50 398.4 V502.40" stroke="#b4b4b4" stroke-width="0.85" stroke-dasharray="1.4 1.8" fill="none"/><path d="M762.50 398.4 V502.40" stroke="#b4b4b4" stroke-width="0.85" stroke-dasharray="1.4 1.8" fill="none"/><path d="M789.50 398.4 V502.40" stroke="#b4b4b4" stroke-width="0.85" stroke-dasharray="1.4 1.8" fill="none"/><path d="M815.50 398.4 V502.40" stroke="#b4b4b4" stroke-width="0.85" stroke-dasharray="1.4 1.8" fill="none"/><path d="M842.50 398.4 V502.40" stroke="#b4b4b4" stroke-width="0.85" stroke-dasharray="1.4 1.8" fill="none"/><path d="M868.50 398.4 V502.40" stroke="#b4b4b4" stroke-width="0.85" stroke-dasharray="1.4 1.8" fill="none"/><path d="M895.50 398.4 V502.40" stroke="#b4b4b4" stroke-width="0.85" stroke-dasharray="1.4 1.8" fill="none"/><path d="M921.50 398.4 V502.40" stroke="#b4b4b4" stroke-width="0.85" stroke-dasharray="1.4 1.8" fill="none"/><path d="M948.50 398.4 V502.40" stroke="#b4b4b4" stroke-width="0.85" stroke-dasharray="1.4 1.8" fill="none"/><path d="M975.50 398.4 V502.40" stroke="#b4b4b4" stroke-width="0.85" stroke-dasharray="1.4 1.8" fill="none"/><path d="M1001.50 398.4 V502.40" stroke="#b4b4b4" stroke-width="0.85" stroke-dasharray="1.4 1.8" fill="none"/><path d="M470.4 403.10 H1001.6" stroke="#b8b020" stroke-width="1.0" stroke-dasharray="1.5 1.7" fill="none"/><path d="M470.4 422.96 H1001.6" stroke="#b8b020" stroke-width="1.0" stroke-dasharray="1.5 1.7" fill="none"/><path d="M470.4 442.82 H1001.6" stroke="#b8b020" stroke-width="1.0" stroke-dasharray="1.5 1.7" fill="none"/><path d="M470.4 462.68 H1001.6" stroke="#b8b020" stroke-width="1.0" stroke-dasharray="1.5 1.7" fill="none"/><path d="M470.4 482.54 H1001.6" stroke="#b8b020" stroke-width="1.0" stroke-dasharray="1.5 1.7" fill="none"/><path d="M470.4 503.80 H1001.6" stroke="#8c8c8c" stroke-width="1.4" stroke-dasharray="0.75 1.906" fill="none"/><path d="M470.4 504.40 H1002.1" stroke="#b4b4b4" stroke-width="2.6" stroke-dasharray="0.8 25.760" fill="none"/><path d="M470.4 502.40 H1001.6" stroke="#cdc52a" stroke-width="1.05" fill="none"/><path d="M470.4 398.4 V502.90" stroke="#d6ce22" stroke-width="1" fill="none"/><path d="M467.80 502.40 H470.4 M468.90 498.43 H470.4 M468.90 494.46 H470.4 M468.90 490.48 H470.4 M468.90 486.51 H470.4 M467.80 482.54 H470.4 M468.90 478.57 H470.4 M468.90 474.60 H470.4 M468.90 470.62 H470.4 M468.90 466.65 H470.4 M467.80 462.68 H470.4 M468.90 458.71 H470.4 M468.90 454.74 H470.4 M468.90 450.76 H470.4 M468.90 446.79 H470.4 M467.80 442.82 H470.4 M468.90 438.85 H470.4 M468.90 434.88 H470.4 M468.90 430.90 H470.4 M468.90 426.93 H470.4 M467.80 422.96 H470.4 M468.90 418.99 H470.4 M468.90 415.02 H470.4 M468.90 411.04 H470.4 M468.90 407.07 H470.4 M467.80 403.10 H470.4 M468.90 399.13 H470.4" stroke="#d6ce22" stroke-width="0.7" fill="none"/><path d="M596.50 353.70 L596.50 304.50 M601.50 348.00 L601.50 292.00 M611.50 348.00 L611.50 314.70 M613.50 348.00 L613.50 291.20 M656.50 348.00 L656.50 280.70 M797.50 353.70 L797.50 303.70 M813.50 319.30 L813.50 331.00 M881.50 319.30 L881.50 331.00 M963.50 319.30 L963.50 332.40 M985.50 319.30 L985.50 331.00 M994.50 319.30 L994.50 331.00 M987.50 319.30 L987.50 326.00 M816.50 319.30 L816.50 316.20" stroke="#22cccc" stroke-width="0.8" fill="none"/><rect x="607.9" y="314.6" width="2.3" height="17.8" fill="#1b9c9c"/><path d="M607.50 348.00 L607.50 316.00 M610.40 332.00 L610.40 348.00" stroke="#22cccc" stroke-width="0.8" fill="none"/><path d="M596.70 304.50 L597.00 316.00 L597.20 307.00 L597.50 320.00 L597.80 309.50 L598.10 321.00 L598.40 314.00 L598.80 328.00 L599.20 324.00 L599.60 332.00 L600.20 332.60 L600.70 327.50 L601.00 331.00 M608.00 315.40 L608.60 313.20 L609.30 312.60 L610.00 314.80 M609.70 332.60 L607.60 332.60 M611.40 314.70 L611.70 332.60 L613.40 332.60 M656.90 309.90 L657.00 353.70 M797.40 303.70 L797.80 318.00 L798.20 309.00 L798.60 319.00 L799.00 312.00 L799.40 319.30" stroke="#24dcdc" stroke-width="0.8" fill="none" stroke-linejoin="round"/><path d="M470.40 353.54 L471.30 353.39 L472.20 353.84 L473.10 353.32 L474.00 353.73 L474.90 353.58 L475.80 353.30 L476.70 353.71 L477.60 353.28 L478.50 353.64 L479.40 353.31 L480.30 353.33 L481.20 353.63 L482.10 353.99 L483.00 353.36 L483.90 353.45 L484.80 353.81 L485.70 354.10 L486.60 353.77 L487.50 353.61 L488.40 354.13 L489.30 353.29 L490.20 354.02 L491.10 353.51 L492.00 353.38 L492.90 353.36 L493.80 353.53 L494.70 353.98 L495.60 353.41 L496.50 353.77 L497.40 353.83 L498.30 353.59 L499.20 353.74 L500.10 353.31 L501.00 353.30 L501.90 353.44 L502.80 353.86 L503.70 353.63 L504.60 353.53 L505.50 353.78 L506.40 353.66 L507.30 353.52 L508.20 353.96 L509.10 353.88 L510.00 353.47 L510.90 353.77 L511.80 353.72 L512.70 354.04 L513.60 353.91 L514.50 353.51 L515.40 354.13 L516.30 353.36 L517.20 353.63 L518.10 353.93 L519.00 353.39 L519.90 353.69 L520.80 353.29 L521.70 353.85 L522.60 353.94 L523.50 353.77 L524.40 354.04 L525.30 353.53 L526.20 353.88 L527.10 353.78 L528.00 353.77 L528.90 353.66 L529.80 354.01 L530.70 354.10 L531.60 353.68 L532.50 353.85 L533.40 353.30 L534.30 353.88 L535.20 353.83 L536.10 354.14 L537.00 353.99 L537.90 353.51 L538.80 353.60 L539.70 353.85 L540.60 353.27 L541.50 353.67 L542.40 353.40 L543.30 353.36 L544.20 353.30 L545.10 353.94 L546.00 353.37 L546.90 353.47 L547.80 353.60 L548.70 354.03 L549.60 353.32 L550.50 353.65 L551.40 353.74 L552.30 354.05 L553.20 353.99 L554.10 354.03 L555.00 353.50 L555.90 353.62 L556.80 353.57 L557.70 354.05 L558.60 354.11 L559.50 353.39 L560.40 353.41 L561.30 353.46 L562.20 353.46 L563.10 353.69 L564.00 353.78 L564.90 353.49 L565.80 353.25 L566.70 353.63 L567.60 353.58 L568.50 353.76 L569.40 354.11 L570.30 353.87 L571.20 353.71 L572.10 353.81 L573.00 353.86 L573.90 353.30 L574.80 354.06 L575.70 353.95 L576.60 354.04 L577.50 353.97 L578.40 353.60 L579.30 353.61 L580.20 353.34 L581.10 353.82 L582.00 353.31 L582.90 353.31 L583.80 353.44 L584.70 353.40 L585.60 353.56 L586.50 353.30 L587.40 353.25 L588.30 353.39 L589.20 353.34 L590.10 353.58 L591.00 353.27 L591.90 354.04 L592.80 353.80 L593.70 353.38 L594.60 353.48 L595.50 353.56 L596.40 353.58 L596.70 353.70 M601.50 347.81 L602.40 348.17 L603.30 348.25 L604.20 347.98 L605.10 347.99 L606.00 347.79 L606.90 347.80 L607.40 348.00 M613.40 347.92 L614.30 347.88 L615.20 348.16 L616.10 347.83 L617.00 347.76 L617.90 348.23 L618.80 348.01 L619.70 347.82 L620.60 348.02 L621.50 347.76 L622.40 348.01 L623.30 348.24 L624.20 348.18 L625.10 348.10 L626.00 347.88 L626.90 347.93 L627.80 347.83 L628.70 348.14 L629.60 348.02 L630.50 348.14 L631.40 347.91 L632.30 347.86 L633.20 348.16 L634.10 348.24 L635.00 348.18 L635.90 348.15 L636.80 348.16 L637.70 348.12 L638.60 347.86 L639.50 348.01 L640.40 347.93 L641.30 347.76 L642.20 347.76 L643.10 347.89 L644.00 347.88 L644.90 348.10 L645.80 348.23 L646.70 347.97 L647.60 348.22 L648.50 348.24 L649.40 348.23 L650.30 347.93 L651.20 347.86 L652.10 347.86 L653.00 347.85 L653.90 347.85 L654.80 348.06 L655.70 348.20 L656.50 348.00 M657.40 354.01 L658.30 353.68 L659.20 353.84 L660.10 353.97 L661.00 353.33 L661.90 353.84 L662.80 354.07 L663.70 353.95 L664.60 353.93 L665.50 353.68 L666.40 353.41 L667.30 353.96 L668.20 353.55 L669.10 353.97 L670.00 354.12 L670.90 353.61 L671.80 353.61 L672.70 354.10 L673.60 353.90 L674.50 353.40 L675.40 353.36 L676.30 353.39 L677.20 354.06 L678.10 353.98 L679.00 353.38 L679.90 353.99 L680.80 354.13 L681.70 353.84 L682.60 353.57 L683.50 353.74 L684.40 353.37 L685.30 353.26 L686.20 354.12 L687.10 353.83 L688.00 353.72 L688.90 354.09 L689.80 353.64 L690.70 354.03 L691.60 353.99 L692.50 353.44 L693.40 353.48 L694.30 353.51 L695.20 353.47 L696.10 353.78 L697.00 353.48 L697.90 353.63 L698.80 353.37 L699.70 354.07 L700.60 353.57 L701.50 353.66 L702.40 353.78 L703.30 354.06 L704.20 353.63 L705.10 354.08 L706.00 353.70 L706.90 353.73 L707.80 353.72 L708.70 353.27 L709.60 353.65 L710.50 353.41 L711.40 353.25 L712.30 353.97 L713.20 353.41 L714.10 353.68 L715.00 353.90 L715.90 353.75 L716.80 353.54 L717.70 353.72 L718.60 353.75 L719.50 353.96 L720.40 353.35 L721.30 353.75 L722.20 353.47 L723.10 353.50 L724.00 353.95 L724.90 353.71 L725.80 353.76 L726.70 353.93 L727.60 354.07 L728.50 353.65 L729.40 353.80 L730.30 353.70 L731.20 353.71 L732.10 353.87 L733.00 353.66 L733.90 353.73 L734.80 353.68 L735.70 354.10 L736.60 353.88 L737.50 354.04 L738.40 354.10 L739.30 353.48 L740.20 353.75 L741.10 354.10 L742.00 354.01 L742.90 353.37 L743.80 353.36 L744.70 353.65 L745.60 353.32 L746.50 353.47 L747.40 353.32 L748.30 353.85 L749.20 353.96 L750.10 354.06 L751.00 353.39 L751.90 353.89 L752.80 353.84 L753.70 353.38 L754.60 354.04 L755.50 354.12 L756.40 353.45 L757.30 354.11 L758.20 353.61 L759.10 353.69 L760.00 354.14 L760.90 354.00 L761.80 353.40 L762.70 353.64 L763.60 353.71 L764.50 353.56 L765.40 353.43 L766.30 353.54 L767.20 353.90 L768.10 353.27 L769.00 353.75 L769.90 353.65 L770.80 353.27 L771.70 353.55 L772.60 353.81 L773.50 353.71 L774.40 353.31 L775.30 354.14 L776.20 353.96 L777.10 354.12 L778.00 353.34 L778.90 353.49 L779.80 353.29 L780.70 353.95 L781.60 353.49 L782.50 353.37 L783.40 353.63 L784.30 354.07 L785.20 353.99 L786.10 353.48 L787.00 353.38 L787.90 354.08 L788.80 353.76 L789.70 353.88 L790.60 353.33 L791.50 353.30 L792.40 353.87 L793.30 353.63 L794.20 353.32 L795.10 354.09 L796.00 353.82 L796.90 353.97 L797.30 353.70" stroke="#25f0f0" stroke-width="1.5" fill="none" stroke-linejoin="round"/><path d="M799.4 319.3 H1001.6" stroke="#25f0f0" stroke-width="1.7" fill="none"/><path d="M799.40 318.22 L799.90 320.23 L800.40 318.17 L800.90 320.24 L801.40 319.18 L801.90 318.88 L802.40 319.44 L802.90 320.41 L803.40 318.70 L803.90 318.34 L804.40 319.37 L804.90 318.62 L805.40 318.28 L805.90 318.42 L806.40 318.13 L806.90 318.52 L807.40 318.81 L807.90 318.79 L808.40 319.97 L808.90 318.75 L809.40 319.30 L809.90 318.46 L810.40 318.90 L810.90 318.05 L811.40 318.65 L811.90 318.04 L812.40 319.91 L812.90 319.43 L813.40 318.49 L813.90 319.23 L814.40 320.43 L814.90 318.28 L815.40 320.13 L815.90 319.12 L816.40 319.29 L816.90 320.17 L817.40 319.02 L817.90 319.32 L818.40 319.79 L818.90 320.55 L819.40 318.89 L819.90 320.16 L820.40 319.84 L820.90 319.65 L821.40 319.05 L821.90 318.90 L822.40 318.14 L822.90 318.34 L823.40 318.18 L823.90 319.93 L824.40 318.66 L824.90 318.42 L825.40 318.22 L825.90 320.19 L826.40 320.26 L826.90 319.74 L827.40 318.73 L827.90 318.63 L828.40 318.76 L828.90 319.19 L829.40 318.41 L829.90 319.16 L830.40 318.68 L830.90 320.50 L831.40 320.53 L831.90 319.42 L832.40 318.64 L832.90 320.51 L833.40 318.80 L833.90 318.93 L834.40 318.00 L834.90 318.99 L835.40 319.23 L835.90 319.31 L836.40 318.52 L836.90 319.31 L837.40 318.01 L837.90 318.69 L838.40 318.23 L838.90 319.04 L839.40 318.11 L839.90 318.06 L840.40 318.79 L840.90 318.61 L841.40 319.52 L841.90 319.38 L842.40 319.95 L842.90 319.71 L843.40 319.86 L843.90 320.29 L844.40 319.01 L844.90 318.85 L845.40 320.56 L845.90 318.39 L846.40 319.88 L846.90 319.67 L847.40 318.11 L847.90 320.17 L848.40 320.32 L848.90 319.63 L849.40 319.91 L849.90 320.11 L850.40 318.36 L850.90 319.36 L851.40 319.31 L851.90 320.17 L852.40 320.09 L852.90 320.15 L853.40 319.52 L853.90 320.32 L854.40 319.78 L854.90 319.80 L855.40 318.60 L855.90 318.08 L856.40 318.35 L856.90 318.94 L857.40 318.27 L857.90 320.17 L858.40 319.45 L858.90 319.63 L859.40 319.63 L859.90 319.77 L860.40 319.27 L860.90 318.01 L861.40 320.07 L861.90 319.95 L862.40 319.31 L862.90 319.39 L863.40 319.71 L863.90 318.17 L864.40 319.92 L864.90 318.66 L865.40 318.19 L865.90 318.69 L866.40 319.90 L866.90 318.53 L867.40 319.92 L867.90 320.54 L868.40 319.28 L868.90 318.99 L869.40 319.25 L869.90 319.78 L870.40 319.99 L870.90 319.60 L871.40 319.67 L871.90 318.20 L872.40 318.38 L872.90 318.66 L873.40 319.93 L873.90 318.79 L874.40 319.48 L874.90 318.03 L875.40 318.16 L875.90 318.70 L876.40 319.75 L876.90 319.80 L877.40 319.76 L877.90 318.76 L878.40 319.34 L878.90 319.21 L879.40 319.21 L879.90 318.31 L880.40 320.32 L880.90 318.52 L881.40 320.54 L881.90 320.43 L882.40 318.05 L882.90 319.19 L883.40 320.13 L883.90 320.52 L884.40 319.17 L884.90 318.70 L885.40 318.55 L885.90 320.46 L886.40 318.55 L886.90 319.51 L887.40 318.37 L887.90 319.36 L888.40 320.48 L888.90 318.34 L889.40 320.13 L889.90 319.32 L890.40 320.31 L890.90 319.83 L891.40 318.60 L891.90 320.33 L892.40 319.26 L892.90 318.06 L893.40 318.01 L893.90 319.28 L894.40 319.17 L894.90 318.79 L895.40 318.37 L895.90 318.89 L896.40 318.82 L896.90 320.18 L897.40 318.00 L897.90 319.95 L898.40 320.18 L898.90 318.31 L899.40 320.41 L899.90 319.85 L900.40 320.34 L900.90 318.75 L901.40 318.97 L901.90 319.02 L902.40 320.60 L902.90 319.53 L903.40 318.94 L903.90 319.11 L904.40 318.72 L904.90 318.13 L905.40 318.26 L905.90 320.17 L906.40 318.74 L906.90 320.43 L907.40 318.65 L907.90 318.69 L908.40 319.33 L908.90 318.49 L909.40 318.97 L909.90 320.49 L910.40 320.30 L910.90 320.11 L911.40 319.64 L911.90 320.37 L912.40 320.45 L912.90 319.43 L913.40 319.87 L913.90 318.13 L914.40 319.90 L914.90 319.17 L915.40 319.96 L915.90 319.68 L916.40 318.74 L916.90 318.13 L917.40 320.41 L917.90 318.33 L918.40 319.23 L918.90 318.89 L919.40 318.77 L919.90 319.92 L920.40 320.54 L920.90 318.68 L921.40 319.71 L921.90 318.78 L922.40 319.45 L922.90 319.03 L923.40 318.44 L923.90 318.42 L924.40 318.54 L924.90 320.36 L925.40 319.29 L925.90 318.57 L926.40 320.36 L926.90 320.59 L927.40 319.17 L927.90 318.36 L928.40 318.50 L928.90 318.24 L929.40 318.89 L929.90 318.24 L930.40 318.62 L930.90 318.67 L931.40 319.48 L931.90 320.31 L932.40 319.95 L932.90 319.07 L933.40 319.08 L933.90 319.36 L934.40 318.98 L934.90 318.88 L935.40 318.16 L935.90 318.72 L936.40 320.52 L936.90 318.33 L937.40 319.31 L937.90 319.64 L938.40 320.24 L938.90 318.56 L939.40 318.70 L939.90 318.65 L940.40 319.04 L940.90 319.16 L941.40 320.48 L941.90 320.21 L942.40 320.27 L942.90 318.06 L943.40 318.08 L943.90 319.84 L944.40 320.33 L944.90 319.23 L945.40 319.53 L945.90 318.00 L946.40 319.02 L946.90 320.41 L947.40 320.15 L947.90 320.22 L948.40 320.53 L948.90 318.65 L949.40 318.28 L949.90 318.40 L950.40 319.36 L950.90 319.77 L951.40 320.45 L951.90 319.88 L952.40 319.68 L952.90 319.99 L953.40 319.19 L953.90 319.43 L954.40 318.10 L954.90 320.03 L955.40 318.60 L955.90 320.39 L956.40 319.68 L956.90 318.79 L957.40 318.33 L957.90 318.65 L958.40 319.65 L958.90 319.82 L959.40 318.29 L959.90 318.18 L960.40 319.36 L960.90 319.52 L961.40 319.01 L961.90 318.58 L962.40 319.56 L962.90 318.03 L963.40 318.78 L963.90 319.20 L964.40 320.49 L964.90 319.68 L965.40 320.30 L965.90 319.24 L966.40 318.61 L966.90 318.64 L967.40 320.50 L967.90 319.83 L968.40 318.80 L968.90 318.06 L969.40 319.30 L969.90 319.75 L970.40 319.09 L970.90 318.67 L971.40 319.74 L971.90 320.41 L972.40 318.59 L972.90 318.09 L973.40 318.88 L973.90 319.09 L974.40 319.77 L974.90 318.52 L975.40 320.07 L975.90 319.92 L976.40 319.31 L976.90 318.53 L977.40 320.52 L977.90 318.81 L978.40 320.13 L978.90 318.60 L979.40 318.58 L979.90 319.98 L980.40 318.77 L980.90 320.48 L981.40 319.29 L981.90 318.49 L982.40 318.58 L982.90 319.08 L983.40 319.73 L983.90 320.47 L984.40 318.38 L984.90 319.02 L985.40 318.55 L985.90 320.53 L986.40 318.37 L986.90 318.13 L987.40 318.16 L987.90 319.02 L988.40 320.34 L988.90 320.30 L989.40 319.91 L989.90 320.59 L990.40 320.42 L990.90 318.86 L991.40 318.48 L991.90 320.43 L992.40 319.94 L992.90 318.08 L993.40 319.73 L993.90 318.98 L994.40 318.97 L994.90 318.86 L995.40 318.44 L995.90 318.01 L996.40 318.73 L996.90 318.91 L997.40 320.48 L997.90 318.32 L998.40 320.51 L998.90 318.54 L999.40 318.93 L999.90 320.14 L1000.40 320.14 L1000.90 319.12 L1001.40 318.13 L1001.60 319.30" stroke="#25f0f0" stroke-width="0.9" fill="none" stroke-linejoin="round"/></svg>
<svg style="left:449px;top:515px" width="558" height="6" viewBox="449 515 558 6"><path d="M2.4 518.3 H965.4" stroke="#04213c" stroke-width="3.5" stroke-dasharray="2.15 1.05" fill="none"/></svg>
<span class="t b" style="left:451.80px;top:269.94px;font-size:6.6px;line-height:7.92px;color:#1fd6d6;transform:scaleX(1.0157);">5V</span>
<span class="t b" style="left:452.20px;top:387.64px;font-size:6.6px;line-height:7.92px;color:#d6ce22;transform:scaleX(0.9196);">12V</span>
<span class="t" style="right:556.20px;transform-origin:100% 50%;top:294.60px;font-size:6.0px;line-height:7.20px;color:#22dede;transform:scaleX(0.9762);">0,80</span>
<span class="t" style="right:556.20px;transform-origin:100% 50%;top:315.90px;font-size:6.0px;line-height:7.20px;color:#22dede;transform:scaleX(0.9762);">0,60</span>
<span class="t" style="right:556.20px;transform-origin:100% 50%;top:337.20px;font-size:6.0px;line-height:7.20px;color:#22dede;transform:scaleX(0.9762);">0,40</span>
<span class="t" style="right:556.20px;transform-origin:100% 50%;top:358.50px;font-size:6.0px;line-height:7.20px;color:#22dede;transform:scaleX(0.9762);">0,20</span>
<span class="t" style="right:556.20px;transform-origin:100% 50%;top:379.80px;font-size:6.0px;line-height:7.20px;color:#22dede;transform:scaleX(0.9762);">0,00</span>
<span class="t" style="right:556.20px;transform-origin:100% 50%;top:399.50px;font-size:6.0px;line-height:7.20px;color:#dcd428;transform:scaleX(0.9762);">0,10</span>
<span class="t" style="right:556.20px;transform-origin:100% 50%;top:419.36px;font-size:6.0px;line-height:7.20px;color:#dcd428;transform:scaleX(0.9762);">0,08</span>
<span class="t" style="right:556.20px;transform-origin:100% 50%;top:439.22px;font-size:6.0px;line-height:7.20px;color:#dcd428;transform:scaleX(0.9762);">0,06</span>
<span class="t" style="right:556.20px;transform-origin:100% 50%;top:459.08px;font-size:6.0px;line-height:7.20px;color:#dcd428;transform:scaleX(0.9762);">0,04</span>
<span class="t" style="right:556.20px;transform-origin:100% 50%;top:478.94px;font-size:6.0px;line-height:7.20px;color:#dcd428;transform:scaleX(0.9762);">0,02</span>
<span class="t" style="right:556.20px;transform-origin:100% 50%;top:498.80px;font-size:6.0px;line-height:7.20px;color:#dcd428;transform:scaleX(0.9762);">0,00</span>
<span class="t" style="left:438.28px;top:327.50px;font-size:5.2px;line-height:6.2px;color:#1fd6d6;transform-origin:50% 50%;transform:rotate(-90deg) scaleX(1.088);">Current ( A )</span>
<span class="t" style="left:438.28px;top:446.10px;font-size:5.2px;line-height:6.2px;color:#d6ce22;transform-origin:50% 50%;transform:rotate(-90deg) scaleX(1.088);">Current ( A )</span>
<span class="t" style="left:487.65px;top:506.86px;font-size:5.9px;line-height:7.08px;color:#f2f2f2;transform:scaleX(0.9300);">-95 000</span>
<span class="t" style="left:514.21px;top:506.86px;font-size:5.9px;line-height:7.08px;color:#f2f2f2;transform:scaleX(0.9300);">-90 000</span>
<span class="t" style="left:540.77px;top:506.86px;font-size:5.9px;line-height:7.08px;color:#f2f2f2;transform:scaleX(0.9300);">-85 000</span>
<span class="t" style="left:567.33px;top:506.86px;font-size:5.9px;line-height:7.08px;color:#f2f2f2;transform:scaleX(0.9300);">-80 000</span>
<span class="t" style="left:593.89px;top:506.86px;font-size:5.9px;line-height:7.08px;color:#f2f2f2;transform:scaleX(0.9300);">-75 000</span>
<span class="t" style="left:620.45px;top:506.86px;font-size:5.9px;line-height:7.08px;color:#f2f2f2;transform:scaleX(0.9300);">-70 000</span>
<span class="t" style="left:647.01px;top:506.86px;font-size:5.9px;line-height:7.08px;color:#f2f2f2;transform:scaleX(0.9300);">-65 000</span>
<span class="t" style="left:673.57px;top:506.86px;font-size:5.9px;line-height:7.08px;color:#f2f2f2;transform:scaleX(0.9300);">-60 000</span>
<span class="t" style="left:700.13px;top:506.86px;font-size:5.9px;line-height:7.08px;color:#f2f2f2;transform:scaleX(0.9300);">-55 000</span>
<span class="t" style="left:726.69px;top:506.86px;font-size:5.9px;line-height:7.08px;color:#f2f2f2;transform:scaleX(0.9300);">-50 000</span>
<span class="t" style="left:753.25px;top:506.86px;font-size:5.9px;line-height:7.08px;color:#f2f2f2;transform:scaleX(0.9300);">-45 000</span>
<span class="t" style="left:779.81px;top:506.86px;font-size:5.9px;line-height:7.08px;color:#f2f2f2;transform:scaleX(0.9300);">-40 000</span>
<span class="t" style="left:806.37px;top:506.86px;font-size:5.9px;line-height:7.08px;color:#f2f2f2;transform:scaleX(0.9300);">-35 000</span>
<span class="t" style="left:832.93px;top:506.86px;font-size:5.9px;line-height:7.08px;color:#f2f2f2;transform:scaleX(0.9300);">-30 000</span>
<span class="t" style="left:859.49px;top:506.86px;font-size:5.9px;line-height:7.08px;color:#f2f2f2;transform:scaleX(0.9300);">-25 000</span>
<span class="t" style="left:886.05px;top:506.86px;font-size:5.9px;line-height:7.08px;color:#f2f2f2;transform:scaleX(0.9300);">-20 000</span>
<span class="t" style="left:912.61px;top:506.86px;font-size:5.9px;line-height:7.08px;color:#f2f2f2;transform:scaleX(0.9300);">-15 000</span>
<span class="t" style="left:939.17px;top:506.86px;font-size:5.9px;line-height:7.08px;color:#f2f2f2;transform:scaleX(0.9300);">-10 000</span>
<span class="t" style="left:967.26px;top:506.86px;font-size:5.9px;line-height:7.08px;color:#f2f2f2;transform:scaleX(0.9300);">-5 000</span>
<span class="t" style="left:1000.07px;top:506.86px;font-size:5.9px;line-height:7.08px;color:#f2f2f2;transform:scaleX(0.9300);">0</span>
<span class="t b" style="left:724.80px;top:514.14px;font-size:5.6px;line-height:6.72px;color:#fff;transform:scaleX(0.8729);">Time (ms)</span>
</body></html>
